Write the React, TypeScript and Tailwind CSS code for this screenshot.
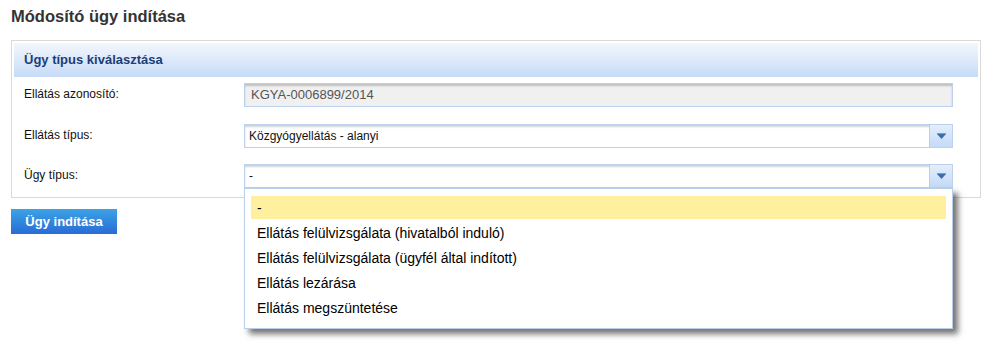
const OPTIONS = [
  "-",
  "Ellátás felülvizsgálata (hivatalból induló)",
  "Ellátás felülvizsgálata (ügyfél által indított)",
  "Ellátás lezárása",
  "Ellátás megszüntetése",
];

function ArrowButton() {
  return (
    <div className="flex w-[23px] shrink-0 items-center justify-center border-l border-[#bcd0ea] bg-gradient-to-b from-[#e4eefc] to-[#c4daf7]">
      <svg width="9" height="6" viewBox="0 0 9 6">
        <rect x="0" y="0" width="9" height="1" fill="#7b9cc4" />
        <polygon points="0,1 9,1 4.5,6" fill="#3a6fae" />
      </svg>
    </div>
  );
}

function Select({ value, open }: { value: string; open?: boolean }) {
  return (
    <div className="relative w-[709px]">
      <div className="flex h-[24px] border border-[#bdd1ec] bg-white shadow-[inset_0_2px_2px_rgba(0,0,0,0.18)]">
        <div className="flex flex-1 items-center pl-[4px] text-[12px] text-[#111]">{value}</div>
        <ArrowButton />
      </div>
      {open && (
        <div className="absolute left-0 top-full z-10 w-[709px] border border-[#b9cfea] bg-white px-[6px] pb-[7px] pt-[7px] shadow-[5px_5px_6px_rgba(0,0,0,0.55)]">
          {OPTIONS.map((o, i) => (
            <div
              key={o}
              className={`mb-[2px] flex h-[23px] items-center px-[6px] pt-[1px] text-[14px] text-black ${i === 0 ? "bg-[#fff09f]" : ""}`}
            >
              {o}
            </div>
          ))}
        </div>
      )}
    </div>
  );
}

function Row({ label, children, className }: { label: string; children: React.ReactNode; className?: string }) {
  return (
    <div className={`flex items-center ${className || ""}`}>
      <div className="w-[230px] pb-[2px] pl-[10px] text-[12px] text-[#111]">{label}</div>
      {children}
    </div>
  );
}

export default function App() {
  return (
    <div className="h-[361px] w-[993px] overflow-hidden bg-white font-['Liberation_Sans',Arial,sans-serif]">
      <h1 className="pl-[11px] pt-[6px] text-[16.5px] font-bold leading-[20px] text-[#333]">Módosító ügy indítása</h1>

      <div className="ml-[11px] mt-[14px] w-[970px] border border-[#d9d9d9] p-[2px] pb-[9px]">
        <div className="flex h-[34px] items-center bg-gradient-to-b from-[#f3f7fd] to-[#c6dbf6] pl-[10px] text-[13px] font-bold text-[#1c3d78]">
          Ügy típus kiválasztása
        </div>

        <Row label="Ellátás azonosító:" className="mt-[6px]">
          <div className="flex h-[24px] w-[709px] items-center border border-[#bdd1ec] bg-[#f0f0f0] pl-[6px] text-[13px] text-[#555] shadow-[inset_0_2px_2px_rgba(0,0,0,0.2)]">
            KGYA-0006899/2014
          </div>
        </Row>
        <Row label="Ellátás típus:" className="mt-[17px]">
          <Select value="Közgyógyellátás - alanyi" />
        </Row>
        <Row label="Ügy típus:" className="mt-[16px]">
          <Select value="-" open />
        </Row>
      </div>

      <button className="ml-[11px] mt-[11px] h-[25px] w-[106px] bg-gradient-to-b from-[#3ca3e6] to-[#2a6bd5] text-[13px] font-bold text-white">
        Ügy indítása
      </button>
    </div>
  );
}
